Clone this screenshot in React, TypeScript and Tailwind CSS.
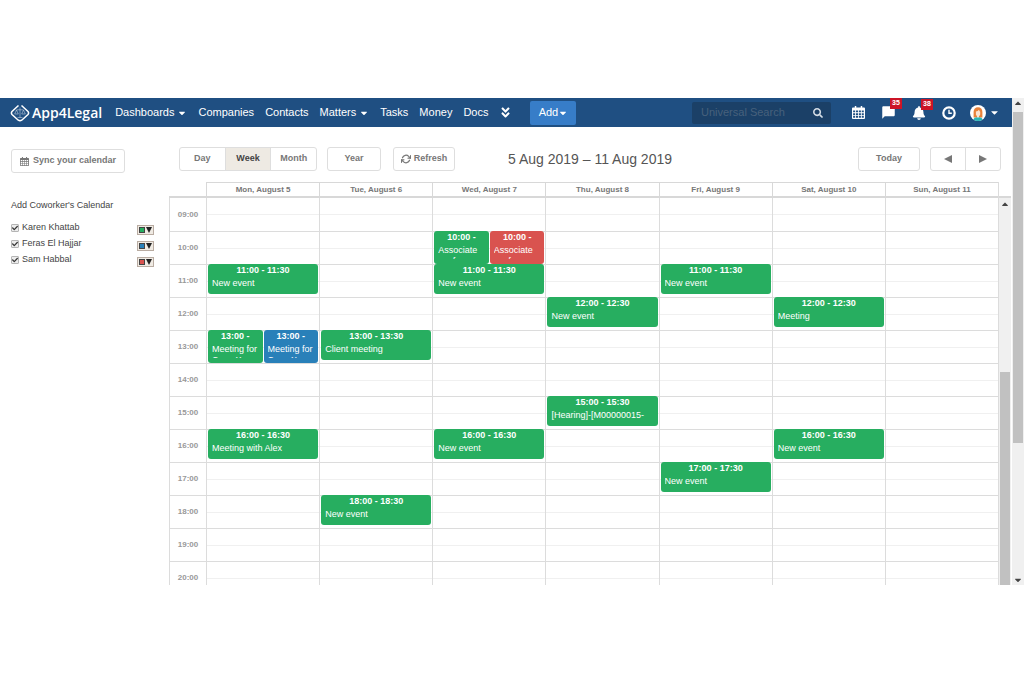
import { useState } from "react";
import clsx from "clsx";
import {
  FaAngleDoubleDown,
  FaBell,
  FaCaretDown,
  FaCaretUp,
  FaCheck,
  FaSearch,
} from "react-icons/fa";
import { MdChatBubble } from "react-icons/md";
import { FiRefreshCw } from "react-icons/fi";

type Tone = "green" | "blue" | "red";

type CalEvent = {
  day: number;
  hour: number;
  time: string;
  title: string;
  tone?: Tone;
};

const TONES: Record<Tone, string> = {
  green: "bg-[#27ae60]",
  blue: "bg-[#2980b9]",
  red: "bg-[#d9534f]",
};

const NAV = [
  { label: "Dashboards", menu: true },
  { label: "Companies" },
  { label: "Contacts" },
  { label: "Matters", menu: true },
  { label: "Tasks" },
  { label: "Money" },
  { label: "Docs" },
];

const DAYS = [
  "Mon, August 5",
  "Tue, August 6",
  "Wed, August 7",
  "Thu, August 8",
  "Fri, August 9",
  "Sat, August 10",
  "Sun, August 11",
];

const HOURS = [9, 10, 11, 12, 13, 14, 15, 16, 17, 18, 19, 20];

const EVENTS: CalEvent[] = [
  { day: 2, hour: 10, time: "10:00 - 11:00", title: "Associate conference" },
  { day: 2, hour: 10, time: "10:00 - 11:00", title: "Associate conference", tone: "red" },
  { day: 0, hour: 11, time: "11:00 - 11:30", title: "New event" },
  { day: 2, hour: 11, time: "11:00 - 11:30", title: "New event" },
  { day: 4, hour: 11, time: "11:00 - 11:30", title: "New event" },
  { day: 3, hour: 12, time: "12:00 - 12:30", title: "New event" },
  { day: 5, hour: 12, time: "12:00 - 12:30", title: "Meeting" },
  { day: 0, hour: 13, time: "13:00 - 14:00", title: "Meeting for Case X" },
  { day: 0, hour: 13, time: "13:00 - 14:00", title: "Meeting for Case X", tone: "blue" },
  { day: 1, hour: 13, time: "13:00 - 13:30", title: "Client meeting" },
  { day: 3, hour: 15, time: "15:00 - 15:30", title: "[Hearing]-[M00000015-" },
  { day: 0, hour: 16, time: "16:00 - 16:30", title: "Meeting with Alex" },
  { day: 2, hour: 16, time: "16:00 - 16:30", title: "New event" },
  { day: 5, hour: 16, time: "16:00 - 16:30", title: "New event" },
  { day: 4, hour: 17, time: "17:00 - 17:30", title: "New event" },
  { day: 1, hour: 18, time: "18:00 - 18:30", title: "New event" },
];

const COWORKERS: { name: string; tone: Tone }[] = [
  { name: "Karen Khattab", tone: "green" },
  { name: "Feras El Hajjar", tone: "blue" },
  { name: "Sam Habbal", tone: "red" },
];

const toolButton =
  "flex h-6 items-center justify-center rounded-[3px] border border-[#dedede] bg-white text-[9px] font-bold text-[#777]";

function LogoMark() {
  return (
    <svg viewBox="0 0 20 18" className="h-[18px] w-5" fill="none" stroke="white">
      <path d="M8.5 1.5 2 7.5Q.8 9 2 10.5L8.3 16.2Q10 17.4 11.7 16.2L18 10.5Q19.2 9 18 7.5L11.5 1.5" strokeWidth="1.5" />
      <path d="M10 3.5v10M6.5 5.8h7M6.5 6 4.7 10h3.6zM13.5 6l-1.8 4h3.6zM7.5 13.5h5" strokeWidth=".6" opacity=".7" />
    </svg>
  );
}

function CalendarIcon({ className }: { className?: string }) {
  return (
    <svg viewBox="0 0 14 14" className={className} fill="currentColor">
      <path
        fillRule="evenodd"
        d="M3 0h1.6v1.6h4.8V0H11v1.6h2q1 0 1 1V13q0 1-1 1H1q-1 0-1-1V2.600q0-1 1-1h2zM1.200 4.800v1.900h2.200V4.800zm3.100 0v1.900h2.200V4.800zm3.100 0v1.900h2.200V4.800zm3.100 0v1.900h2.200V4.800zM1.200 7.700v1.900h2.200V7.700zm3.100 0v1.900h2.200V7.700zm3.100 0v1.900h2.200V7.700zm3.100 0v1.900h2.200V7.700zM1.200 10.600v2.100h2.200v-2.100zm3.100 0v2.100h2.200v-2.100zm3.100 0v2.100h2.200v-2.100zm3.100 0v2.100h2.200v-2.100z"
      />
    </svg>
  );
}

function ClockIcon() {
  return (
    <svg viewBox="0 0 14 14" className="size-[14px]" fill="none" stroke="currentColor">
      <circle cx="7" cy="7" r="5.700" strokeWidth="2.200" />
      <path d="M7 3.800V7.300H9.800" strokeWidth="1.400" />
    </svg>
  );
}

function Triangle({ className }: { className?: string }) {
  return (
    <svg viewBox="0 0 8 8" className={className} fill="currentColor">
      <path d="M0 0 8 4 0 8z" />
    </svg>
  );
}

function Avatar() {
  return (
    <svg viewBox="0 0 16 16" className="size-4">
      <circle cx="8" cy="8" r="8" fill="#fff" />
      <path d="M3.600 12.500V7Q3.800 2.200 8 2.200T12.400 7v5.500z" fill="#e8823a" />
      <path d="M5.900 6.500Q8 6.200 9 4.800q.4 1.500 1.200 2v2.600Q10 11 8 11.200 6.200 11 5.900 9.400z" fill="#fbe3d0" />
      <path d="M7 10.500h2v2.500H7z" fill="#fbe3d0" />
      <path d="M3.300 14.400Q4 12.400 7 12.300q1 .9 2 0 3 .1 3.700 2.100Q10.500 16 8 16t-4.700-1.600z" fill="#2bb5b5" />
    </svg>
  );
}

function Badge({ count }: { count: number }) {
  return (
    <span className="absolute -top-[7px] left-[9px] flex h-[11px] w-3 items-center justify-center bg-[#cc1426] text-[7px] font-bold text-white">
      {count}
    </span>
  );
}

function Header() {
  return (
    <header className="flex h-[29px] items-center bg-[#1f4f82] pr-3 pl-[10px] text-[11px] text-white">
      <a href="#home" className="flex items-center gap-[2px] font-['Open_Sans',sans-serif] text-[14px] font-semibold">
        <LogoMark />
        App4Legal
      </a>

      <nav className="ml-[13px] flex items-center gap-[11px]">
        {NAV.map((item) => (
          <a key={item.label} href={`#${item.label}`} className="flex items-center gap-[3px]">
            {item.label}
            {item.menu && <FaCaretDown className="size-[10px]" />}
          </a>
        ))}
        <button type="button" aria-label="More">
          <FaAngleDoubleDown className="size-[13px]" />
        </button>
      </nav>

      <button
        type="button"
        className="ml-[18px] flex h-6 w-[46px] items-center justify-center rounded-[2px] bg-[#377dc8]"
      >
        Add
        <FaCaretDown className="size-[10px]" />
      </button>

      <label className="ml-auto flex h-[22px] w-[139px] items-center rounded-[2px] bg-[#1b4067] pr-2 pl-[9px]">
        <input
          type="search"
          aria-label="Universal Search"
          placeholder="Universal Search"
          className="w-full min-w-0 bg-transparent outline-none placeholder:text-[#47607c]"
        />
        <FaSearch className="size-[10px] flex-none text-[#d5dde6]" />
      </label>

      <div className="ml-[21px] flex items-center gap-4">
        <button type="button" aria-label="Calendar">
          <CalendarIcon className="size-[13px]" />
        </button>
        <button type="button" aria-label="Messages" className="relative">
          <MdChatBubble className="size-[15px]" />
          <Badge count={35} />
        </button>
        <button type="button" aria-label="Notifications" className="relative">
          <FaBell className="size-[14px]" />
          <Badge count={38} />
        </button>
        <button type="button" aria-label="Time log">
          <ClockIcon />
        </button>
      </div>
      <button type="button" aria-label="Profile" className="ml-[14px] flex items-center gap-[3px]">
        <Avatar />
        <FaCaretDown className="size-[11px]" />
      </button>
    </header>
  );
}

function Sidebar() {
  return (
    <aside className="w-[169px] flex-none pt-[22px] pr-[15px] pl-[11px] text-[9px] text-[#444]">
      <button type="button" className={clsx(toolButton, "w-[114px] gap-1")}>
        <CalendarIcon className="size-[9px]" />
        Sync your calendar
      </button>

      <h2 className="mt-[26px] leading-3">Add Coworker's Calendar</h2>

      <ul className="mt-[9px]">
        {COWORKERS.map((person) => (
          <li key={person.name} className="flex h-4 items-center justify-between">
            <label className="flex items-center gap-[3px]">
              <span className="relative flex">
                <input
                  type="checkbox"
                  defaultChecked
                  className="peer size-2 appearance-none rounded-[1px] border border-[#b5b5b5] bg-[#ececec]"
                />
                <FaCheck className="pointer-events-none absolute top-px left-px hidden size-[6px] text-[#333] peer-checked:block" />
              </span>
              {person.name}
            </label>
            <button
              type="button"
              aria-label={`Colour of ${person.name}`}
              className="mt-1 flex h-[10px] w-[17px] items-center justify-center gap-px border border-[#b9aca2] bg-[#f0ebe4] text-[#222]"
            >
              <span className={clsx("size-[6px] border border-[#444]", TONES[person.tone])} />
              <Triangle className="size-[6px] rotate-90" />
            </button>
          </li>
        ))}
      </ul>
    </aside>
  );
}

function Toolbar() {
  const [view, setView] = useState("Week");

  return (
    <div className="grid grid-cols-[1fr_auto_1fr] items-center pt-[20px] pr-[11px] pl-[10px]">
      <div className="flex gap-[10px]">
        <div className={clsx(toolButton, "w-[138px] overflow-hidden")}>
          {["Day", "Week", "Month"].map((name) => (
            <button
              key={name}
              type="button"
              onClick={() => setView(name)}
              className={clsx(
                "h-full flex-1",
                view === name && "border-x border-[#dedede] bg-[#eeeae3] text-[#444]",
              )}
            >
              {name}
            </button>
          ))}
        </div>
        <button type="button" className={clsx(toolButton, "w-[54px]")}>
          Year
        </button>
        <button type="button" className={clsx(toolButton, "ml-[2px] w-[62px] gap-[3px]")}>
          <FiRefreshCw className="size-[10px]" strokeWidth={3} />
          Refresh
        </button>
      </div>

      <h1 className="text-[14px] text-[#555]">5 Aug 2019 – 11 Aug 2019</h1>

      <div className="flex justify-end gap-[10px]">
        <button type="button" className={clsx(toolButton, "w-[62px]")}>
          Today
        </button>
        <div className={toolButton}>
          <button type="button" aria-label="Previous week" className="flex h-full w-[35px] items-center justify-center border-r border-[#dedede]">
            <Triangle className="size-2 rotate-180" />
          </button>
          <button type="button" aria-label="Next week" className="flex h-full w-[34px] items-center justify-center">
            <Triangle className="size-2" />
          </button>
        </div>
      </div>
    </div>
  );
}

function EventCard({ event, shared }: { event: CalEvent; shared: boolean }) {
  return (
    <article
      className={clsx(
        "min-w-0 flex-1 rounded-[3px] px-1 text-[9px] text-white",
        shared ? "h-[33px]" : "h-[30px]",
        TONES[event.tone ?? "green"],
      )}
    >
      <div className="h-7 overflow-hidden">
        <p className="h-[14px] overflow-hidden text-center leading-[13px] font-bold">
          {shared ? event.time.slice(0, 7) : event.time}
        </p>
        <p className="leading-[11px]">{event.title}</p>
      </div>
    </article>
  );
}

function WeekTable() {
  return (
    <table className="w-full table-fixed border-separate border-spacing-0 border-r border-[#dcdcdc]">
      <thead>
        <tr className="h-4 text-[8px] leading-3 text-[#777]">
          <td className="w-[37px] border-b-2 border-[#d8d8d8] p-0" />
          {DAYS.map((day) => (
            <th
              key={day}
              scope="col"
              className="border-t border-b-2 border-l border-[#d8d8d8] p-0 font-bold"
            >
              {day}
            </th>
          ))}
        </tr>
      </thead>
      <tbody>
        {HOURS.map((hour, row) => (
          <tr key={hour} className="h-[33px]">
            <th
              scope="row"
              className={clsx(
                "border-l border-[#dcdcdc] p-0 text-[8px] font-bold text-[#999]",
                row > 0 && "border-t",
              )}
            >
              {String(hour).padStart(2, "0")}:00
            </th>
            {DAYS.map((day, col) => {
              const events = EVENTS.filter((e) => e.day === col && e.hour === hour);
              return (
                <td
                  key={day}
                  className={clsx(
                    "border-l border-[#dcdcdc] bg-[linear-gradient(#f0f0f0,#f0f0f0)] bg-[length:100%_1px] bg-[position:0_16px] bg-no-repeat p-0 align-top",
                    row > 0 && "border-t",
                  )}
                >
                  {events.length > 0 && (
                    <div className="-mt-px flex h-[33px] items-start gap-px px-px">
                      {events.map((event, i) => (
                        <EventCard key={i} event={event} shared={events.length > 1} />
                      ))}
                    </div>
                  )}
                </td>
              );
            })}
          </tr>
        ))}
      </tbody>
    </table>
  );
}

export default function App() {
  return (
    <div className="min-h-screen bg-white py-[98px] font-['Liberation_Sans',Arial,sans-serif]">
      <div className="flex h-[calc(100vh-196px)] overflow-hidden">
        <div className="flex min-w-0 flex-1 flex-col">
          <Header />
          <main className="flex min-h-0 flex-1">
            <Sidebar />
            <section className="flex min-w-0 flex-1 flex-col">
              <Toolbar />
              <div className="mt-[11px] flex min-h-0 flex-1 overflow-hidden">
                <div className="min-w-0 flex-1">
                  <WeekTable />
                </div>
                {/* calendar scrollbar */}
                <div
                  aria-hidden
                  className="mt-[14px] mr-px flex w-3 flex-none flex-col items-center border-t-2 border-[#d8d8d8] bg-[#f0f0f0]"
                >
                  <FaCaretUp className="mt-px size-[10px] flex-none text-[#444]" />
                  <div className="mt-auto h-[55%] w-[10px] bg-[#c1c1c1]" />
                </div>
              </div>
            </section>
          </main>
        </div>

        {/* page scrollbar */}
        <div aria-hidden className="flex w-3 flex-none flex-col items-center bg-[#f0f0f0] text-[#444]">
          <FaCaretUp className="size-[10px] flex-none" />
          <div className="mt-1 h-[68%] w-[10px] bg-[#c1c1c1]" />
          <FaCaretDown className="mt-auto size-[10px] flex-none" />
        </div>
      </div>
    </div>
  );
}
